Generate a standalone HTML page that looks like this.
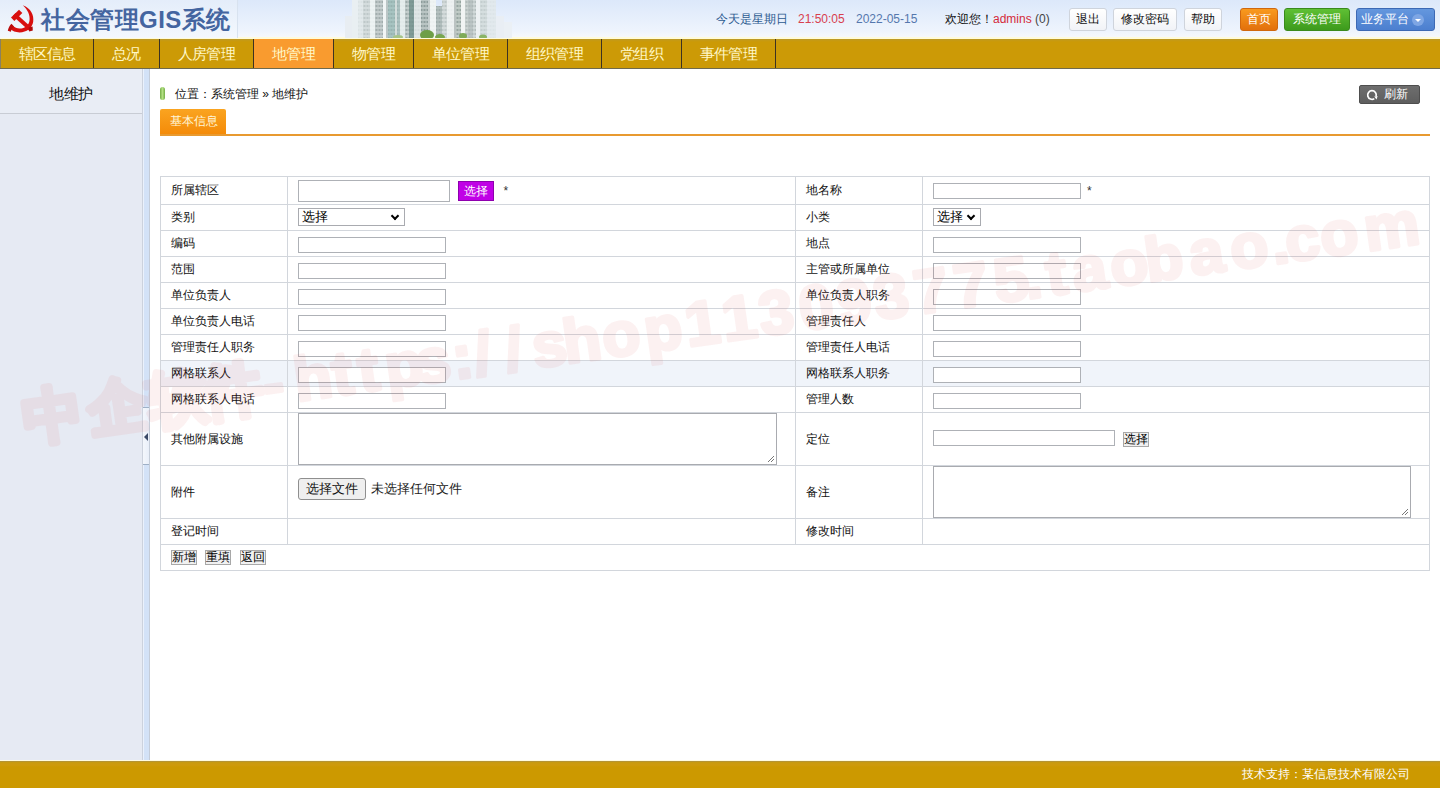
<!DOCTYPE html>
<html><head><meta charset="utf-8">
<style>
*{margin:0;padding:0;box-sizing:border-box}
html,body{width:1440px;height:788px;overflow:hidden;background:#fff;font-family:"Liberation Sans",sans-serif;font-size:12px;color:#222}
.abs{position:absolute}
#hd{position:absolute;left:0;top:0;width:1440px;height:39px;background:linear-gradient(#dce8fa,#eef4fd 80%,#f6f8fc 94%,#fffbda 95%,#fffbda)}
#logo{position:absolute;left:0;top:0;width:238px;height:38px;background:linear-gradient(#e4edfa,#f4f8fd);border-right:1px solid #d8e2ef}
#logo .t{position:absolute;left:41px;top:4px;font-size:24px;font-weight:bold;color:#4465a0;letter-spacing:0.5px;white-space:nowrap}
.hbtn{position:absolute;top:8px;height:23px;border:1px solid #cfd4dc;border-radius:3px;background:linear-gradient(#fff,#f1f3f7);font-size:12px;line-height:21px;text-align:center;color:#111}
.cbtn{position:absolute;top:8px;height:23px;border-radius:3px;font-size:12px;line-height:21px;text-align:center;color:#fff}
#nav{position:absolute;left:0;top:39px;width:1440px;height:30px;background:linear-gradient(#b89a30 0,#c49a18 1px,#cc9a06 3px);border-bottom:1px solid #6e6a4e}
#nav .it{position:absolute;top:0;height:29px;border-right:1px solid #3c3222;color:#fff8c8;font-size:15px;line-height:30px;letter-spacing:-0.8px;text-align:center}
#nav .on{background:#f99b2f}
#side{position:absolute;left:0;top:69px;width:142px;height:691px;background:#e6eaf3}
#side .item{position:absolute;left:0;top:0;width:142px;height:45px;border-bottom:1px solid #c8ccd4;background:#e9edf5;font-size:15px;line-height:50px;letter-spacing:-0.6px;text-align:center;color:#111}
#split{position:absolute;left:142px;top:69px;width:8px;height:691px;background:linear-gradient(90deg,#eaf1fc 0,#eaf1fc 1px,#d3e2f7 1px);border-left:1px solid #ccd2dd;border-right:1px solid #c4ccd8}
#ft{position:absolute;left:0;top:760px;width:1440px;height:28px;background:linear-gradient(#fffbe0 0,#fffbe0 1px,#b49433 1px,#b49433 2px,#c69a10 2px,#cf9a0a 5px,#cc9900 7px);color:#fff;font-size:12px}
table.f{position:absolute;left:160px;top:176px;width:1270px;border-collapse:collapse;font-size:12px}
table.f td{border:1px solid #d2d6dc;height:26px;padding:0 0 0 10px;color:#111;vertical-align:middle}
.inp{display:inline-block;position:relative;top:1px;width:148px;height:16px;border:1px solid #aeb1b6;background:#fff;vertical-align:middle}

table.f tr.hl td{background:#f0f4fa}
.pbtn{display:inline-block;width:36px;height:20px;margin-left:8px;background:#c000e6;border:1px solid #8e00ae;color:#fff;text-align:center;line-height:18px;vertical-align:middle;font-size:12px}
.ast{display:inline-block;margin-left:10px;vertical-align:middle;color:#333;font-size:12px}
.sel{display:inline-block;position:relative;top:-1px;height:18px;border:1px solid #a9abb0;background:#fff;vertical-align:middle;font-size:13px;line-height:16px;padding-left:3px;color:#000}
.chev{position:absolute;right:6px;top:4px;width:6px;height:6px;border-right:2px solid #000;border-bottom:2px solid #000;transform:rotate(45deg)}
.grip{position:absolute;right:1px;bottom:1px}
.ta{display:inline-block;position:relative;height:52px;border:1px solid #a9abb0;background:#fff;vertical-align:middle}
.gbtn{display:inline-block;margin-left:8px;height:15px;padding:0;border:1px solid #a8a8a8;background:#f1f1f1;line-height:13px;vertical-align:middle;font-size:12px;color:#000}
.fbtn{display:inline-block;position:relative;top:-3px;width:68px;height:22px;border:1px solid #8f8f8f;border-radius:3px;background:#efefef;text-align:center;line-height:20px;vertical-align:middle;font-size:13px;color:#111}
</style></head><body>
<div id="hd">
  <div id="logo">
    <svg class="abs" style="left:0;top:0" width="40" height="38" viewBox="0 0 40 38">
      <path d="M22.8 5.2 C31 8.3 34.2 15 33.2 21.8 C32.2 28.2 26.8 32.4 19.5 32.4 C15.5 32.4 12.3 31 10.2 28.8 L12.6 25.6 C14.6 27.6 17 28.6 19.6 28.6 C25 28.6 28.9 25.4 29.5 20.5 C30.2 15 27.8 9.8 22.8 5.2 Z" fill="#d80f0f"/>
      <path d="M7.8 30.8 C8.3 28 9.8 25.2 11.5 23.8 L14 26.6 C12.4 28 11.2 30 10.9 31.8 Z" fill="#bb0c0c"/>
      <path d="M15.5 13 L32 28 L29.4 30.9 L12.9 15.9 Z" fill="#d80f0f"/>
      <path d="M11 17.6 L19 9.8 L22.3 13.1 L14.3 20.9 Z" fill="#d80f0f"/>
      <path d="M28.6 27.4 L32.6 26.6 L32.8 30.6 L29.2 31.6 Z" fill="#b00b0b"/>
    </svg>
    <div class="t">社会管理GIS系统</div>
  </div>
  <svg class="abs" style="left:0;top:0" width="520" height="38" viewBox="0 0 520 38">
    <defs><filter id="bl" x="-5%" y="-5%" width="110%" height="110%"><feGaussianBlur stdDeviation="0.6"/></filter><pattern id="win" width="3" height="4" patternUnits="userSpaceOnUse"><rect x="0.5" y="1" width="2" height="2" fill="#3a5050"/></pattern></defs>
    <g filter="url(#bl)"><rect x="345" y="16" width="7" height="22" fill="#e8edf2"/><rect x="352" y="0" width="6" height="38" fill="#e9eff2"/><rect x="358" y="0" width="5" height="38" fill="#e2e9eb"/><rect x="358" y="0" width="5" height="38" fill="url(#win)" opacity="0.04"/><rect x="363" y="0" width="7" height="38" fill="#d4dcdd"/><rect x="363" y="0" width="7" height="38" fill="url(#win)" opacity="0.14"/><rect x="370" y="0" width="5" height="38" fill="#edf3f3"/><rect x="370" y="0" width="5" height="38" fill="url(#win)" opacity="0.03"/><rect x="375" y="0" width="8" height="38" fill="#c4cdcd"/><rect x="375" y="0" width="8" height="38" fill="url(#win)" opacity="0.25"/><rect x="383" y="0" width="3" height="38" fill="#f1f5f5"/><rect x="386" y="0" width="2" height="38" fill="#bbc6c6"/><rect x="388" y="0" width="7" height="38" fill="#a7c3c1"/><rect x="388" y="0" width="7" height="38" fill="url(#win)" opacity="0.14"/><rect x="395" y="0" width="2" height="38" fill="#d3dcdb"/><rect x="397" y="0" width="3" height="38" fill="#acc2c1"/><rect x="397" y="0" width="3" height="38" fill="url(#win)" opacity="0.11"/><rect x="400" y="0" width="5" height="38" fill="#e6eded"/><rect x="400" y="0" width="5" height="38" fill="url(#win)" opacity="0.03"/><rect x="405" y="0" width="4" height="38" fill="#c3cdcc"/><rect x="405" y="0" width="4" height="38" fill="url(#win)" opacity="0.28"/><rect x="409" y="0" width="5" height="38" fill="#809b97"/><rect x="409" y="0" width="5" height="38" fill="url(#win)" opacity="0.11"/><rect x="414" y="0" width="7" height="38" fill="#dfe6e6"/><rect x="414" y="0" width="7" height="38" fill="url(#win)" opacity="0.06"/><rect x="421" y="0" width="7" height="38" fill="#b9c4c3"/><rect x="421" y="0" width="7" height="38" fill="url(#win)" opacity="0.33"/><rect x="428" y="0" width="2" height="38" fill="#c7cfcf"/><rect x="430" y="0" width="6" height="38" fill="#f0f4f4"/><rect x="430" y="0" width="6" height="38" fill="url(#win)" opacity="0.03"/><rect x="436" y="6" width="6" height="32" fill="#b3bfbe"/><rect x="436" y="6" width="6" height="32" fill="url(#win)" opacity="0.17"/><rect x="442" y="0" width="5" height="38" fill="#d4dbdb"/><rect x="442" y="0" width="5" height="38" fill="url(#win)" opacity="0.14"/><rect x="447" y="0" width="7" height="38" fill="#edf1f1"/><rect x="447" y="0" width="7" height="38" fill="url(#win)" opacity="0.03"/><rect x="454" y="0" width="2" height="38" fill="#bbc3c2"/><rect x="456" y="0" width="5" height="38" fill="#bfcac5"/><rect x="456" y="0" width="5" height="38" fill="url(#win)" opacity="0.30"/><rect x="461" y="0" width="4" height="38" fill="#f1f4f4"/><rect x="465" y="0" width="3" height="38" fill="#cad2d1"/><rect x="465" y="0" width="3" height="38" fill="url(#win)" opacity="0.17"/><rect x="468" y="0" width="5" height="38" fill="#bcc5c5"/><rect x="468" y="0" width="5" height="38" fill="url(#win)" opacity="0.11"/><rect x="473" y="0" width="3" height="38" fill="#d0d8d8"/><rect x="473" y="0" width="3" height="38" fill="url(#win)" opacity="0.19"/><rect x="476" y="0" width="4" height="38" fill="#edf1f3"/><rect x="480" y="0" width="7" height="38" fill="#d5dedf"/><rect x="480" y="0" width="7" height="38" fill="url(#win)" opacity="0.11"/><rect x="487" y="0" width="9" height="38" fill="#e2e9ed"/><rect x="487" y="0" width="9" height="38" fill="url(#win)" opacity="0.03"/><rect x="496" y="16" width="8" height="22" fill="#e9eef4"/><rect x="504" y="22" width="8" height="16" fill="#ebf0f5"/><ellipse cx="427" cy="35" rx="7" ry="5" fill="#6e9e46"/><ellipse cx="440" cy="37" rx="5" ry="3" fill="#78a650"/><ellipse cx="463" cy="36" rx="4" ry="3" fill="#7eaa58"/><ellipse cx="483" cy="37" rx="4" ry="2.5" fill="#8ab466"/><ellipse cx="398" cy="37" rx="5" ry="2" fill="#a6c48a"/></g>
  </svg>
  <div class="abs" style="left:716px;top:11px;color:#2c5a90">今天是星期日</div>
  <div class="abs" style="left:798px;top:12px;color:#d8404e">21:50:05</div>
  <div class="abs" style="left:856px;top:12px;color:#5577ad">2022-05-15</div>
  <div class="abs" style="left:945px;top:11px;color:#111">欢迎您！<span style="color:#d42a3a">admins</span> <span style="color:#444">(0)</span></div>
  <div class="hbtn" style="left:1069px;width:38px">退出</div>
  <div class="hbtn" style="left:1113px;width:64px">修改密码</div>
  <div class="hbtn" style="left:1184px;width:38px">帮助</div>
  <div class="cbtn" style="left:1240px;width:38px;background:linear-gradient(#f99a1e,#e2700c);border:1px solid #d0680e">首页</div>
  <div class="cbtn" style="left:1284px;width:66px;background:linear-gradient(#5fc034,#3d9a1c);border:1px solid #3a8a1c">系统管理</div>
  <div class="cbtn" style="left:1356px;width:79px;background:linear-gradient(#6497de,#4c7fcf);border:1px solid #3d69b4;text-align:left;padding-left:4px">业务平台<span class="abs" style="left:55px;top:5px;width:12px;height:12px;border-radius:6px;background:#7ea6e4"></span><span class="abs" style="left:58px;top:10px;width:0;height:0;border-left:3px solid transparent;border-right:3px solid transparent;border-top:3px solid #fff"></span></div>
</div>
<div id="nav">
  <div class="it" style="left:0;width:94px;border-left:1px solid #8a8060">辖区信息</div>
  <div class="it" style="left:94px;width:66px">总况</div>
  <div class="it" style="left:160px;width:94px">人房管理</div>
  <div class="it on" style="left:254px;width:80px">地管理</div>
  <div class="it" style="left:334px;width:80px">物管理</div>
  <div class="it" style="left:414px;width:94px">单位管理</div>
  <div class="it" style="left:508px;width:94px">组织管理</div>
  <div class="it" style="left:602px;width:80px">党组织</div>
  <div class="it" style="left:682px;width:94px">事件管理</div>
</div>
<div id="side"><div class="item">地维护</div></div>
<div id="split"></div>
<div class="abs" style="left:143px;top:407px;width:6px;height:58px;background:linear-gradient(90deg,#f4f7fc,#e9eff9);border-top:1px solid #9fb0c6;border-bottom:1px solid #9fb0c6"></div>
<div class="abs" style="left:144px;top:433px;width:0;height:0;border-top:4px solid transparent;border-bottom:4px solid transparent;border-right:4px solid #3a4a68"></div>

<div id="main">
  <div class="abs" style="left:160px;top:87px;width:5px;height:13px;border-radius:2.5px;background:linear-gradient(90deg,#74ad48,#b2e082 50%,#74ad48)"></div>
  <div class="abs" style="left:175px;top:86px;color:#111">位置：系统管理 » 地维护</div>
  <div class="abs" style="left:1359px;top:85px;width:61px;height:19px;border-radius:2px;background:linear-gradient(#6e6e6e,#5e5e5e);border:1px solid #4e4e4e;color:#fff;line-height:17px">
    <svg class="abs" style="left:6px;top:3px" width="12" height="12" viewBox="0 0 12 12"><path d="M8.3 9.6 A4.3 4.3 0 1 1 10.1 7.2" fill="none" stroke="#fff" stroke-width="1.7"/><path d="M8.2 7.6 L11.6 7.0 L10.6 10.6 Z" fill="#fff"/></svg>
    <span class="abs" style="left:24px;top:0">刷新</span>
  </div>
  <div class="abs" style="left:160px;top:109px;width:66px;height:26px;border-radius:2px 2px 0 0;background:linear-gradient(#faa420,#f48a08);color:#fff6d8;line-height:24px;padding-left:10px">基本信息</div>
  <div class="abs" style="left:160px;top:134px;width:1270px;height:2px;background:#e89a30"></div>
</div>
<table class="f">
<colgroup><col style="width:127px"><col style="width:509px"><col style="width:127px"><col style="width:507px"></colgroup>
<tr style="height:28px"><td>所属辖区</td><td><span class="inp" style="width:152px;height:22px;top:0"></span><span class="pbtn">选择</span><span class="ast">*</span></td><td>地名称</td><td><span class="inp" style="top:0"></span><span class="ast" style="margin-left:6px">*</span></td></tr>
<tr><td>类别</td><td><span class="sel" style="width:107px">选择<i class="chev"></i></span></td><td>小类</td><td><span class="sel" style="width:48px">选择<i class="chev"></i></span></td></tr>
<tr><td>编码</td><td><span class="inp"></span></td><td>地点</td><td><span class="inp"></span></td></tr>
<tr><td>范围</td><td><span class="inp"></span></td><td>主管或所属单位</td><td><span class="inp"></span></td></tr>
<tr><td>单位负责人</td><td><span class="inp"></span></td><td>单位负责人职务</td><td><span class="inp"></span></td></tr>
<tr><td>单位负责人电话</td><td><span class="inp"></span></td><td>管理责任人</td><td><span class="inp"></span></td></tr>
<tr><td>管理责任人职务</td><td><span class="inp"></span></td><td>管理责任人电话</td><td><span class="inp"></span></td></tr>
<tr class="hl"><td>网格联系人</td><td><span class="inp"></span></td><td>网格联系人职务</td><td><span class="inp"></span></td></tr>
<tr><td>网格联系人电话</td><td><span class="inp"></span></td><td>管理人数</td><td><span class="inp"></span></td></tr>
<tr style="height:53px"><td>其他附属设施</td><td><span class="ta" style="width:479px"><svg class="grip" width="9" height="9" viewBox="0 0 9 9"><path d="M8 2 L2 8 M8 5 L5 8" stroke="#777" stroke-width="1"/></svg></span></td><td>定位</td><td><span class="inp" style="width:182px;top:-1px"></span><span class="gbtn">选择</span></td></tr>
<tr style="height:53px"><td>附件</td><td><span class="fbtn">选择文件</span><span style="font-size:13px;margin-left:5px;color:#222;vertical-align:middle;position:relative;top:-3px">未选择任何文件</span></td><td>备注</td><td><span class="ta" style="width:478px"><svg class="grip" width="9" height="9" viewBox="0 0 9 9"><path d="M8 2 L2 8 M8 5 L5 8" stroke="#777" stroke-width="1"/></svg></span></td></tr>
<tr><td>登记时间</td><td></td><td>修改时间</td><td></td></tr>
<tr><td colspan="4"><span class="gbtn" style="margin-left:0">新增</span><span class="gbtn" style="margin-left:8px">重填</span><span class="gbtn" style="margin-left:9px">返回</span></td></tr>
</table>
<svg class="abs" style="left:0;top:0;pointer-events:none" width="1440" height="788" viewBox="0 0 1440 788">
  <g opacity="0.068" transform="rotate(-8 22 440)" font-family="Liberation Sans" font-weight="bold" fill="#d83a3a" stroke="#d83a3a" stroke-width="3.5" stroke-linejoin="round"><text x="26.0" y="441" font-size="60" stroke-width="6">中</text><text x="91.7" y="441" font-size="60" stroke-width="6">企</text><text x="152.3" y="441" font-size="60" stroke-width="6">软</text><text x="207.8" y="441" font-size="60" stroke-width="6">件</text><text x="268.4" y="440" font-size="62">-</text><text x="299.7" y="440" font-size="62">h</text><text x="338.1" y="440" font-size="62">t</text><text x="364.4" y="440" font-size="62">t</text><text x="391.6" y="440" font-size="62">p</text><text x="422.9" y="440" font-size="62">s</text><text x="459.3" y="440" font-size="62">:</text><text x="481.5" y="440" font-size="62">/</text><text x="512.8" y="440" font-size="62">/</text><text x="540.1" y="440" font-size="62">s</text><text x="571.4" y="440" font-size="62">h</text><text x="610.8" y="440" font-size="62">o</text><text x="653.2" y="440" font-size="62">p</text><text x="694.6" y="440" font-size="62">1</text><text x="731.9" y="440" font-size="62">1</text><text x="769.3" y="440" font-size="62">3</text><text x="809.7" y="440" font-size="62">0</text><text x="848.1" y="440" font-size="62">9</text><text x="885.4" y="440" font-size="62">3</text><text x="925.8" y="440" font-size="62">7</text><text x="966.2" y="440" font-size="62">7</text><text x="1006.6" y="440" font-size="62">5</text><text x="1036.9" y="440" font-size="62">.</text><text x="1059.1" y="440" font-size="62">t</text><text x="1085.4" y="440" font-size="62">a</text><text x="1123.8" y="440" font-size="62">o</text><text x="1159.1" y="440" font-size="62">b</text><text x="1203.5" y="440" font-size="62">a</text><text x="1244.9" y="440" font-size="62">o</text><text x="1286.3" y="440" font-size="62">.</text><text x="1300.5" y="440" font-size="62">c</text><text x="1335.8" y="440" font-size="62">o</text><text x="1380.2" y="440" font-size="62">m</text></g>
</svg>
<div id="ft"><div class="abs" style="left:1242px;top:6px">技术支持：某信息技术有限公司</div></div>
</body></html>
